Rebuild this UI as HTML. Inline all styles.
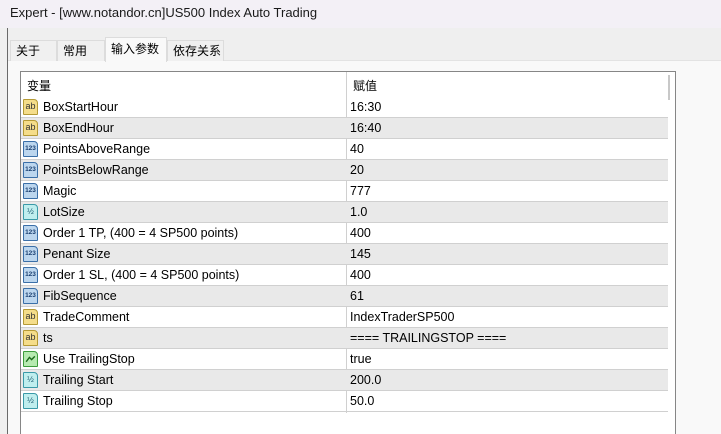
<!DOCTYPE html>
<html style="width:721px;height:434px;overflow:hidden"><head><meta charset="utf-8"><style>
*{margin:0;padding:0;box-sizing:border-box}
body{width:721px;height:434px;overflow:hidden;background:#f9f9f9;font-family:"Segoe UI","Liberation Sans","Noto Sans CJK SC",sans-serif;font-size:12px;color:#000;position:relative}
.title{position:absolute;left:0;top:0;width:721px;height:28px;background:#f3f0f6;font-size:13px;padding:5px 0 0 10px;color:#1a1a1a}
.strip{position:absolute;left:0;top:28px;width:721px;height:33px;background:#efefef;border-bottom:1px solid #e3e3e3}
.lframe{position:absolute;left:0;top:28px;width:8px;height:406px;background:#f0f0f0;border-right:1px solid #6a6a6a}
.tab{position:absolute;top:40px;height:21px;background:#f0f0f0;border:1px solid #dcdcdc;border-bottom:none;font-family:"Noto Sans CJK SC",sans-serif;font-size:12px;padding:1px 0 0 5px}
.tab.sel{top:37px;height:25px;background:#f9f9f9;padding-top:2px;border-color:#dcdcdc}
.tbl{position:absolute;left:20px;top:71px;width:656px;height:363px;background:#fff;border:1px solid #868686;border-bottom:none}
.hdr{position:absolute;left:0;top:0;width:647px;height:25px;font-family:"Noto Sans CJK SC",sans-serif;font-size:12px}
.row{position:absolute;left:0;width:647px;height:21px;border-bottom:1px solid #d0d0d0}
.row.g{background:#e9e9e9}
.n{position:absolute;left:22px;top:3px;font-size:12.5px}
.v{position:absolute;left:329px;top:3px;font-size:12.5px}
.div{position:absolute;left:325px;top:0;width:1px;height:341px;background:#d0d0d0}
.ic{position:absolute;left:2px;top:2px;width:15px;height:16px;border:1px solid #b59a35;background:#f5dd8a;border-radius:1px 4px 1px 1px;font-size:9px;line-height:13px;text-align:center;color:#333;font-family:"Liberation Sans",sans-serif}
.ic.i{background:#bcd6ee;border-color:#3a6fa8;color:#1a3f70;font-size:6.5px;font-weight:bold}
.ic.d{background:#bfeeee;border-color:#3a9aa8;color:#1a5a70;font-size:8px}
.ic.b{background:#b6eab0;border-color:#3c9c3c;color:#1a5a1a}
.sb{position:absolute;left:647px;top:3px;width:2px;height:25px;background:#c8c8c8}
</style></head><body>
<div class="title">Expert - [www.notandor.cn]US500 Index Auto Trading</div>
<div class="strip"></div>
<div class="lframe"></div>
<div class="tab" style="left:10px;width:47px">关于</div>
<div class="tab" style="left:57px;width:48px">常用</div>
<div class="tab" style="left:167px;width:57px">依存关系</div>
<div class="tab sel" style="left:105px;width:62px">输入参数</div>
<div class="tbl">
<div class="hdr"><span style="position:absolute;left:6px;top:5px">变量</span><span style="position:absolute;left:332px;top:5px">赋值</span></div>
<div class="div"></div>
<div class="sb"></div>
<div class="row" style="top:25px"><div class="ic">ab</div><span class="n">BoxStartHour</span><span class="v">16:30</span></div>
<div class="row g" style="top:46px"><div class="ic">ab</div><span class="n">BoxEndHour</span><span class="v">16:40</span></div>
<div class="row" style="top:67px"><div class="ic i">123</div><span class="n">PointsAboveRange</span><span class="v">40</span></div>
<div class="row g" style="top:88px"><div class="ic i">123</div><span class="n">PointsBelowRange</span><span class="v">20</span></div>
<div class="row" style="top:109px"><div class="ic i">123</div><span class="n">Magic</span><span class="v">777</span></div>
<div class="row g" style="top:130px"><div class="ic d">½</div><span class="n">LotSize</span><span class="v">1.0</span></div>
<div class="row" style="top:151px"><div class="ic i">123</div><span class="n">Order 1 TP, (400 = 4 SP500 points)</span><span class="v">400</span></div>
<div class="row g" style="top:172px"><div class="ic i">123</div><span class="n">Penant Size</span><span class="v">145</span></div>
<div class="row" style="top:193px"><div class="ic i">123</div><span class="n">Order 1 SL, (400 = 4 SP500 points)</span><span class="v">400</span></div>
<div class="row g" style="top:214px"><div class="ic i">123</div><span class="n">FibSequence</span><span class="v">61</span></div>
<div class="row" style="top:235px"><div class="ic">ab</div><span class="n">TradeComment</span><span class="v">IndexTraderSP500</span></div>
<div class="row g" style="top:256px"><div class="ic">ab</div><span class="n">ts</span><span class="v">==== TRAILINGSTOP ====</span></div>
<div class="row" style="top:277px"><div class="ic b"><svg width="13" height="13" viewBox="0 0 12 12"><path d="M2 9 L5 5 L7 7 L10 4" stroke="#1a6a1a" stroke-width="1.3" fill="none"/></svg></div><span class="n">Use TrailingStop</span><span class="v">true</span></div>
<div class="row g" style="top:298px"><div class="ic d">½</div><span class="n">Trailing Start</span><span class="v">200.0</span></div>
<div class="row" style="top:319px"><div class="ic d">½</div><span class="n">Trailing Stop</span><span class="v">50.0</span></div>
</div>
</body></html>
